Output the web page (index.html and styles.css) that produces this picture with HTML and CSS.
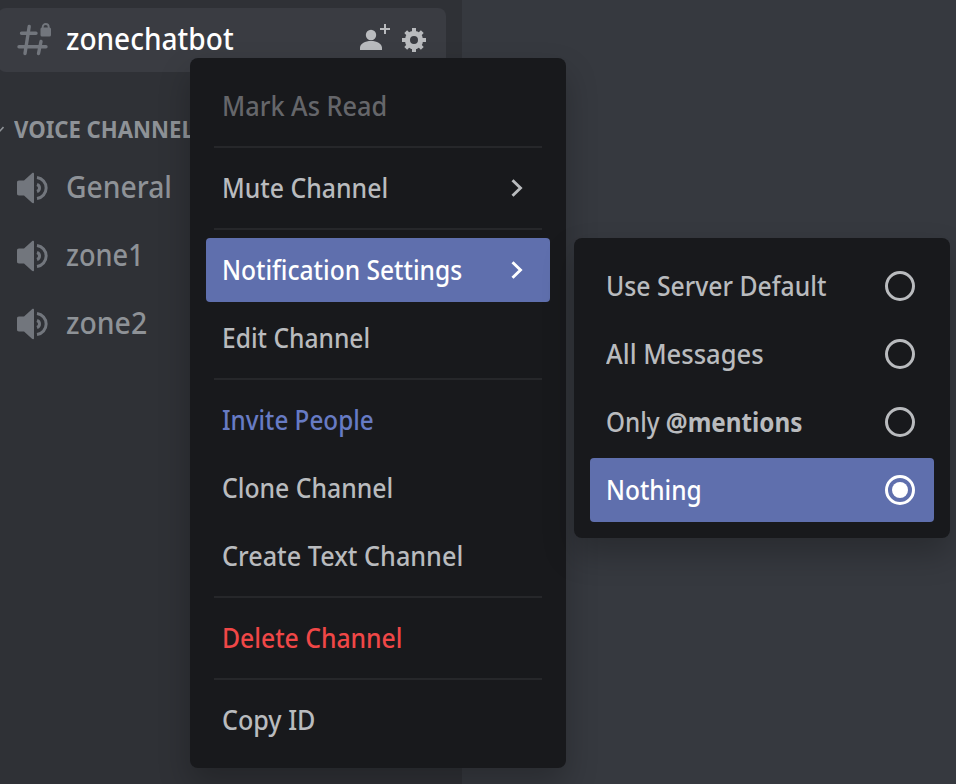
FILE: index.html
```html
<!DOCTYPE html>
<html lang="en">
<head>
<meta charset="utf-8">
<title>zonechatbot</title>
<link rel="stylesheet" href="styles.css">
</head>
<body>
<svg class="defs" width="0" height="0">
  <symbol id="speaker" viewBox="0 0 34 32">
    <path fill="currentColor" d="M18 1.800V30.200c0 1.300-1.300 1.300-2 .6L8 23.500H3C1.500 23.500 1 22.800 1 21.500V10.500C1 9.200 1.500 8.500 3 8.500H8L16 1.200c.7-.7 2-.7 2 .6z"/>
    <path fill="none" stroke="currentColor" stroke-width="3" d="M21 5.500a10.600 10.600 0 0 1 0 21"/>
    <path fill="none" stroke="currentColor" stroke-width="3" d="M21 12.500a3.700 3.700 0 0 1 0 7"/>
  </symbol>
  <symbol id="chevron" viewBox="0 0 12 18"><path fill="none" stroke="currentColor" stroke-width="2.900" d="M1.500 1.200 9.500 9 1.500 16.800"/></symbol>
</svg>
<div class="app">
  <aside class="sidebar">
    <div class="channel selected">
      <svg class="hash" width="36" height="34" viewBox="0 0 36 34" fill="none" stroke="currentColor" stroke-width="3.400" stroke-linecap="round">
        <path d="M5.500 10.300H20M3 23.700H30M13.200 3.500 9 30.500M25 18.500 22.500 30.500"/>
        <rect x="24.500" y="4.500" width="10.500" height="9" rx="1.500" fill="currentColor" stroke="none"/>
        <path stroke-width="1.900" d="M26.700 6V4a3 3 0 0 1 6 0V6"/>
      </svg>
      <span class="name t-zcb">zonechatbot</span>
      <svg class="invite" width="32" height="28" viewBox="0 0 32 28" fill="currentColor">
        <circle cx="12" cy="12" r="5.200"/>
        <path d="M1 27v-2.500C1.500 20.500 6 18 12 18s10.500 2.500 11 6.500V27zM25 1h2v4h4v2h-4v4h-2V7h-4V5h4z"/>
      </svg>
      <svg class="gear" width="24" height="24" viewBox="-12 -12 24 24">
        <circle r="6.600" fill="none" stroke="currentColor" stroke-width="5.200"/>
        <path fill="none" stroke="currentColor" stroke-width="4" d="M0-12V-7M0 7V12M-12 0H-7M7 0H12M-8.300-8.300-5.500-5.500M5.500 5.500 8.300 8.300M-8.300 8.300-5.500 5.500M5.500-5.500 8.300-8.300"/>
      </svg>
    </div>
    <div class="category">
      <svg width="10" height="8" viewBox="0 0 10 8"><path fill="none" stroke="currentColor" stroke-width="1.600" d="M1 1.500 5 6 9.500 1"/></svg>
      <span class="t-cat">VOICE CHANNELS</span>
    </div>
    <div class="channel"><svg class="speaker"><use href="#speaker"/></svg><span class="name t-gen">General</span></div>
    <div class="channel"><svg class="speaker"><use href="#speaker"/></svg><span class="name t-z1">zone1</span></div>
    <div class="channel"><svg class="speaker"><use href="#speaker"/></svg><span class="name t-z2">zone2</span></div>
  </aside>
  <main class="content"></main>
</div>
<div class="menu context">
  <div class="item disabled"><span class="t-mark">Mark As Read</span></div>
  <hr>
  <div class="item"><span class="t-mute">Mute Channel</span><svg class="chevron"><use href="#chevron"/></svg></div>
  <hr>
  <div class="item active"><span class="t-notif">Notification Settings</span><svg class="chevron"><use href="#chevron"/></svg></div>
  <div class="item"><span class="t-edit">Edit Channel</span></div>
  <hr>
  <div class="item brand"><span class="t-inv">Invite People</span></div>
  <div class="item"><span class="t-clone">Clone Channel</span></div>
  <div class="item"><span class="t-create">Create Text Channel</span></div>
  <hr>
  <div class="item danger"><span class="t-del">Delete Channel</span></div>
  <hr>
  <div class="item"><span class="t-copy">Copy ID</span></div>
</div>
<div class="menu submenu">
  <div class="item"><span class="t-use">Use Server Default</span><i class="radio"></i></div>
  <div class="item"><span class="t-all">All Messages</span><i class="radio"></i></div>
  <div class="item"><span class="t-only">Only <b>@mentions</b></span><i class="radio"></i></div>
  <div class="item active"><span class="t-none">Nothing</span><i class="radio checked"></i></div>
</div>
</body>
</html>
```
FILE: styles.css
```css
* { box-sizing: border-box; }
body { margin: 0; width: 956px; height: 784px; overflow: hidden; position: relative; font-family: "Noto Sans", "Open Sans", sans-serif; font-weight: 500; background: #36393f; }
.defs { display: block; position: absolute; }
.app { display: flex; height: 784px; }
.sidebar { width: 462px; background: #2f3136; padding: 8px 16px 0 0; overflow: hidden; }
.content { flex: 1; background: #36393f; }
.channel { display: flex; align-items: center; height: 64px; margin-bottom: 4px; padding-left: 16px; color: #72767d; }
.channel .name { font-size: 30px; color: #8e9297; white-space: nowrap; padding-bottom: 3px; }
.selected { margin-left: -2px; padding: 0 20px 0 18px; background: #3a3c42; border-radius: 8px; margin-bottom: 0; }
.selected .name { color: #fff; flex: 1; }
.hash { margin-right: 14px; }
.speaker { width: 34px; height: 32px; margin-right: 16px; }
.invite { color: #b9bbbe; margin: -6px 11px 0 0; }
.gear { color: #b9bbbe; }
.category { display: flex; align-items: center; height: 84px; padding-top: 32px; margin-left: -6px; color: #8e9297; white-space: nowrap; }
.category svg { margin-right: 10px; }
.category span { font-size: 24px; font-weight: 700; padding-bottom: 4px; }
.menu { position: absolute; width: 376px; padding: 16px; background: #18191c; border-radius: 8px; box-shadow: 0 16px 32px rgba(0, 0, 0, .24); }
.context { left: 190px; top: 58px; }
.submenu { left: 574px; top: 238px; }
.item { display: flex; align-items: center; justify-content: space-between; height: 64px; padding: 0 16px; border-radius: 4px; color: #b9bbbe; font-size: 27px; white-space: nowrap; }
.item + .item { margin-top: 4px; }
.item span { padding-bottom: 2px; }
.item b { font-weight: 700; }
.disabled { color: #65666a; }
.brand { color: #677bc4; }
.danger { color: #f04747; }
.active { background: #5f6fad; color: #fff; }
hr { height: 2px; margin: 8px; border: 0; background: #26272a; }
.chevron { width: 12px; height: 18px; margin-right: 11px; }
.radio { display: block; width: 30px; height: 30px; margin-right: 3px; border: 3px solid currentColor; border-radius: 50%; }
.checked { padding: 4px; background: currentColor content-box; }

/* Condensed label widths */
.channel .name, .category span, .item span { transform: scaleX(var(--w, .92)); transform-origin: left; }
.t-zcb { --w: .935; }
.t-cat { --w: .922; }
.t-gen { --w: .943; }
.t-z1 { --w: .905; }
.t-z2 { --w: .945; }
.t-mark { --w: .937; }
.t-mute { --w: .919; }
.t-notif { --w: .91; }
.t-edit { --w: .911; }
.t-inv { --w: .898; }
.t-clone { --w: .918; }
.t-create { --w: .934; }
.t-del { --w: .916; }
.t-copy { --w: .93; }
.t-use { --w: .917; }
.t-all { --w: .946; }
.t-only { --w: .898; }
.t-none { --w: .905; }
```
